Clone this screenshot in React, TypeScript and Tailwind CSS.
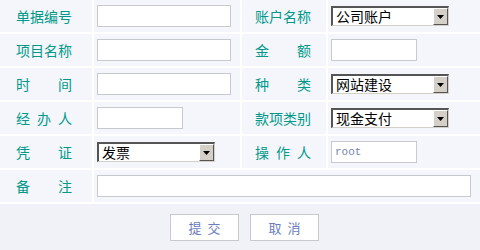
import type { ReactNode } from 'react';

const FONT = "font-['SimSun','Noto_Sans_CJK_SC',sans-serif]";

function Label({ text, right = false }: { text: string; right?: boolean }) {
  const chars = text.split('');
  return (
    <div
      className={`flex items-center bg-[#f4f6fc] ${right ? 'pl-[13px]' : 'pl-4'}`}
    >
      <div className="flex w-[56px] justify-between text-[14px] leading-none text-[#009988]">
        {chars.map((c, i) => (
          <span key={i}>{c}</span>
        ))}
      </div>
    </div>
  );
}

function Cell({ children, span = false }: { children?: ReactNode; span?: boolean }) {
  return (
    <div
      className={`flex items-center bg-[#f4f6fc] pl-[3px] ${span ? 'col-span-3' : ''}`}
    >
      {children}
    </div>
  );
}

function TextInput({ width, value }: { width: string; value?: string }) {
  return (
    <div
      className={`flex h-[22px] items-center border border-[#c8c8cf] bg-white px-[3px] ${width}`}
    >
      {value && (
        <span className="font-['Liberation_Mono',monospace] text-[11px] text-[#7585b0]">
          {value}
        </span>
      )}
    </div>
  );
}

function FakeSelect({ value }: { value: string }) {
  return (
    <div className="flex h-[20px] w-[118px] border-t-2 border-l-2 border-b border-r border-t-[#555] border-l-[#555] border-b-[#d4d0c8] border-r-[#d4d0c8] bg-white">
      <span className="flex-1 pl-[3px] text-[14px] leading-[17px] text-black">{value}</span>
      <div className="flex w-[15px] items-center justify-center border-t border-l border-t-white border-l-white border-r border-b border-r-[#555] border-b-[#555] bg-[#d4d0c8]">
        <svg width="7" height="4" viewBox="0 0 7 4">
          <path d="M0 0h7L3.5 4z" fill="#000" />
        </svg>
      </div>
    </div>
  );
}

function Btn({ a, b }: { a: string; b: string }) {
  return (
    <button
      type="button"
      className="flex h-[27px] w-[69px] items-center justify-center gap-[6px] border border-[#c8c8cf] bg-white text-[13px] text-[#6a7dc0]"
    >
      <span>{a}</span>
      <span>{b}</span>
    </button>
  );
}

export default function App() {
  return (
    <div className={`h-[250px] w-[480px] bg-[#f1f2f7] ${FONT}`}>
      <div className="grid grid-cols-[92px_146px_84px_152px] auto-rows-[32px] gap-[2px] bg-white pb-[2px]">
        <Label text="单据编号" />
        <Cell>
          <TextInput width="w-[134px]" />
        </Cell>
        <Label text="账户名称" right />
        <Cell>
          <FakeSelect value="公司账户" />
        </Cell>

        <Label text="项目名称" />
        <Cell>
          <TextInput width="w-[134px]" />
        </Cell>
        <Label text="金额" right />
        <Cell>
          <TextInput width="w-[86px]" />
        </Cell>

        <Label text="时间" />
        <Cell>
          <TextInput width="w-[134px]" />
        </Cell>
        <Label text="种类" right />
        <Cell>
          <FakeSelect value="网站建设" />
        </Cell>

        <Label text="经办人" />
        <Cell>
          <TextInput width="w-[86px]" />
        </Cell>
        <Label text="款项类别" right />
        <Cell>
          <FakeSelect value="现金支付" />
        </Cell>

        <Label text="凭证" />
        <Cell>
          <FakeSelect value="发票" />
        </Cell>
        <Label text="操作人" right />
        <Cell>
          <TextInput width="w-[86px]" value="root" />
        </Cell>

        <Label text="备注" />
        <Cell span>
          <TextInput width="w-[374px]" />
        </Cell>
      </div>
      <div className="flex justify-center gap-[11px] pl-[9px] pt-[10px]">
        <Btn a="提" b="交" />
        <Btn a="取" b="消" />
      </div>
    </div>
  );
}
